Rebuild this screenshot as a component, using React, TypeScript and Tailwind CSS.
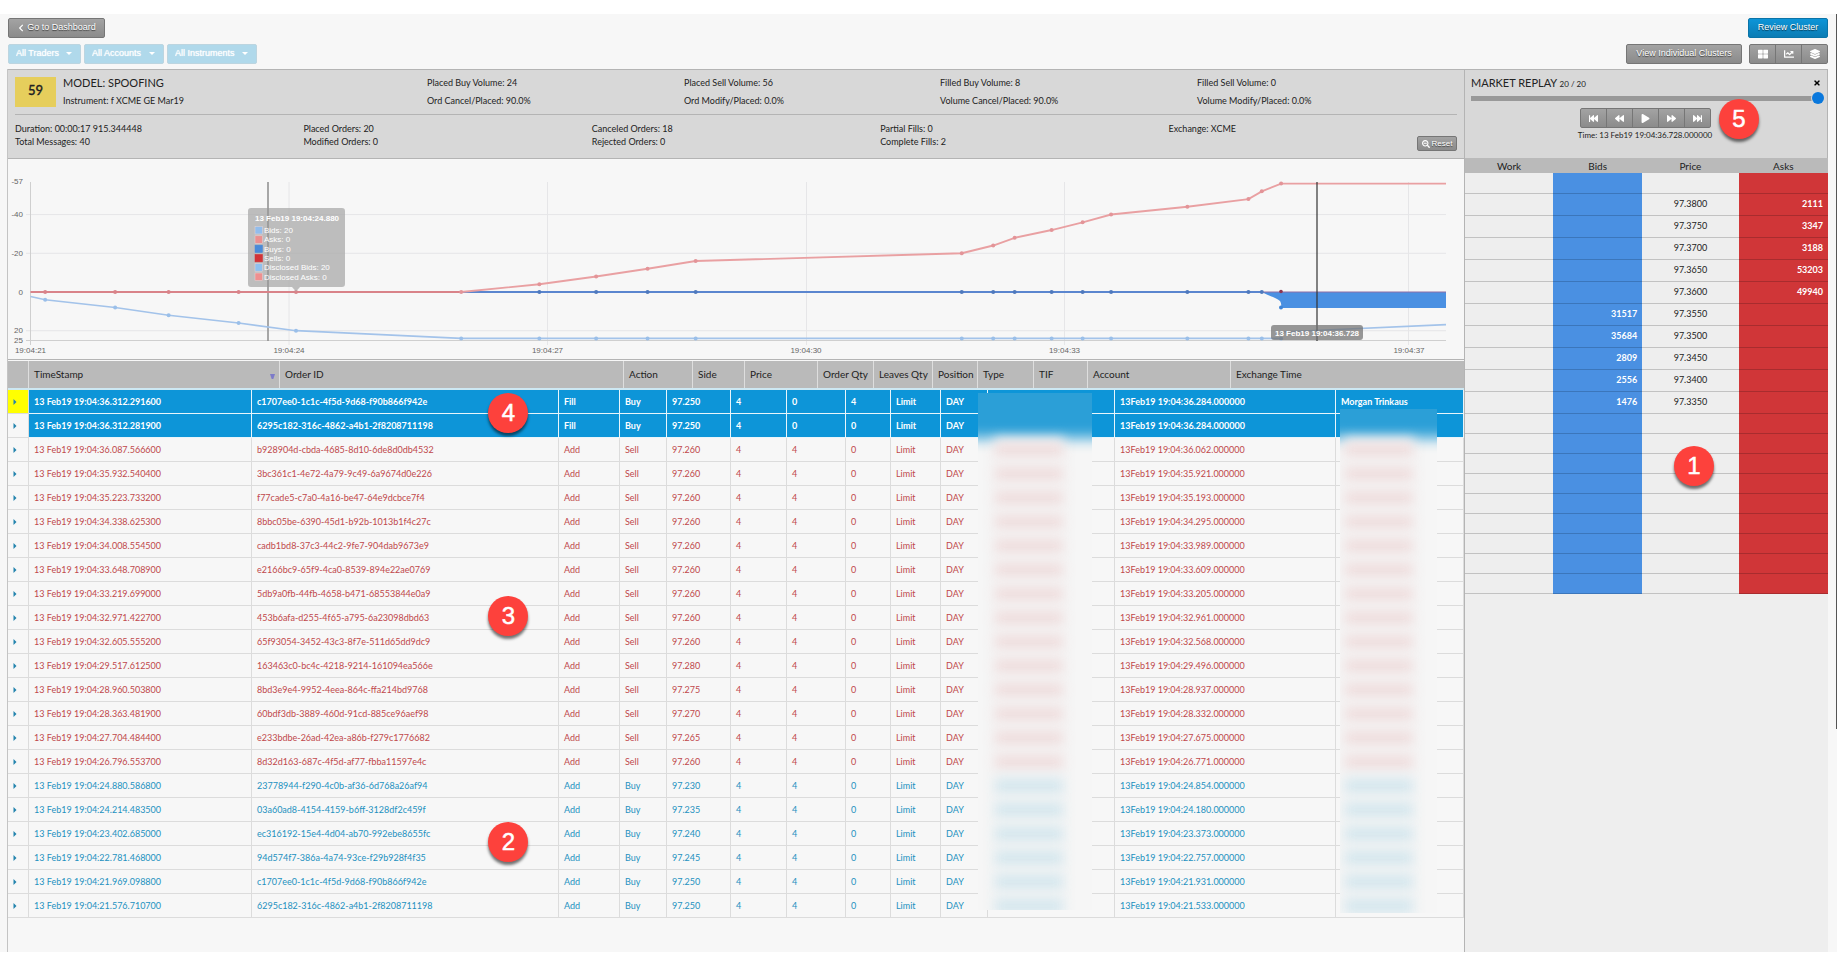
import React from "react";
import {
  FaBackward,
  FaChartLine,
  FaChevronLeft,
  FaFastBackward,
  FaFastForward,
  FaForward,
  FaLayerGroup,
  FaPlay,
  FaSearchMinus,
  FaThLarge,
  FaTimes,
} from "react-icons/fa";

const GREY_BUTTON =
  "flex items-center justify-center border border-[#767676] bg-linear-to-b from-[#a3a3a3] to-[#8b8b8b] font-['Liberation_Sans',sans-serif] text-white [text-shadow:0_1px_1px_rgba(0,0,0,0.6)]";

const HEADER_GRID =
  "grid grid-cols-[21fr_251fr_344fr_69fr_52fr_73fr_56fr_59fr_45fr_56fr_54fr_143fr_233fr]";
const BODY_GRID =
  "grid grid-cols-[21fr_223fr_307fr_61fr_47fr_64fr_56fr_59fr_45fr_50fr_47fr_127fr_221fr_128fr]";

const HEADERS = [
  "", "TimeStamp", "Order ID", "Action", "Side", "Price", "Order Qty",
  "Leaves Qty", "Position", "Type", "TIF", "Account", "Exchange Time",
];

type Order = {
  time: string;
  id: string;
  action: string;
  side: string;
  price: string;
  qty: string;
  leaves: string;
  position: string;
  exchange: string;
  trader?: string;
};

const add = (side: string, time: string, id: string, price: string, exchange: string): Order => ({
  time, id, action: "Add", side, price, qty: "4", leaves: "4", position: "0", exchange,
});

const ORDERS: Order[] = [
  { time: "36.312.291600", id: "c1707ee0-1c1c-4f5d-9d68-f90b866f942e", action: "Fill", side: "Buy", price: "97.250", qty: "4", leaves: "0", position: "4", exchange: "36.284", trader: "Morgan Trinkaus" },
  { time: "36.312.281900", id: "6295c182-316c-4862-a4b1-2f8208711198", action: "Fill", side: "Buy", price: "97.250", qty: "4", leaves: "0", position: "0", exchange: "36.284" },
  add("Sell", "36.087.566600", "b928904d-cbda-4685-8d10-6de8d0db4532", "97.260", "36.062"),
  add("Sell", "35.932.540400", "3bc361c1-4e72-4a79-9c49-6a9674d0e226", "97.260", "35.921"),
  add("Sell", "35.223.733200", "f77cade5-c7a0-4a16-be47-64e9dcbce7f4", "97.260", "35.193"),
  add("Sell", "34.338.625300", "8bbc05be-6390-45d1-b92b-1013b1f4c27c", "97.260", "34.295"),
  add("Sell", "34.008.554500", "cadb1bd8-37c3-44c2-9fe7-904dab9673e9", "97.260", "33.989"),
  add("Sell", "33.648.708900", "e2166bc9-65f9-4ca0-8539-894e22ae0769", "97.260", "33.609"),
  add("Sell", "33.219.699000", "5db9a0fb-44fb-4658-b471-68553844e0a9", "97.260", "33.205"),
  add("Sell", "32.971.422700", "453b6afa-d255-4f65-a795-6a23098dbd63", "97.260", "32.961"),
  add("Sell", "32.605.555200", "65f93054-3452-43c3-8f7e-511d65dd9dc9", "97.260", "32.568"),
  add("Sell", "29.517.612500", "163463c0-bc4c-4218-9214-161094ea566e", "97.280", "29.496"),
  add("Sell", "28.960.503800", "8bd3e9e4-9952-4eea-864c-ffa214bd9768", "97.275", "28.937"),
  add("Sell", "28.363.481900", "60bdf3db-3889-460d-91cd-885ce96aef98", "97.270", "28.332"),
  add("Sell", "27.704.484400", "e233bdbe-26ad-42ea-a86b-f279c1776682", "97.265", "27.675"),
  add("Sell", "26.796.553700", "8d32d163-687c-4f5d-af77-fbba11597e4c", "97.260", "26.771"),
  add("Buy", "24.880.586800", "23778944-f290-4c0b-af36-6d768a26af94", "97.230", "24.854"),
  add("Buy", "24.214.483500", "03a60ad8-4154-4159-b6ff-3128df2c459f", "97.235", "24.180"),
  add("Buy", "23.402.685000", "ec316192-15e4-4d04-ab70-992ebe8655fc", "97.240", "23.373"),
  add("Buy", "22.781.468000", "94d574f7-386a-4a74-93ce-f29b928f4f35", "97.245", "22.757"),
  add("Buy", "21.969.098800", "c1707ee0-1c1c-4f5d-9d68-f90b866f942e", "97.250", "21.931"),
  add("Buy", "21.576.710700", "6295c182-316c-4862-a4b1-2f8208711198", "97.250", "21.533"),
];

type Level = { bid?: string; price?: string; ask?: string };

const LADDER: Level[] = [
  {},
  { price: "97.3800", ask: "2111" },
  { price: "97.3750", ask: "3347" },
  { price: "97.3700", ask: "3188" },
  { price: "97.3650", ask: "53203" },
  { price: "97.3600", ask: "49940" },
  { price: "97.3550", bid: "31517" },
  { price: "97.3500", bid: "35684" },
  { price: "97.3450", bid: "2809" },
  { price: "97.3400", bid: "2556" },
  { price: "97.3350", bid: "1476" },
  {}, {}, {}, {}, {}, {}, {}, {}, {},
];

function Filter({ label, width }: { label: string; width: string }) {
  return (
    <div className={`relative ${width}`}>
      <select
        aria-label={label}
        className="block h-5 w-full appearance-none rounded-[2px] border border-[#bcd5e0] bg-[#b0d9eb] pl-[7px] font-['Liberation_Sans',sans-serif] text-[9px] text-white [text-shadow:0_0_1px_#ffffff]"
      >
        <option>{label}</option>
      </select>
      <svg viewBox="0 0 6 3" className="pointer-events-none absolute top-2 right-[9px] h-[3px] w-[6px] fill-white">
        <path d="M0 0h6L3 3z" />
      </svg>
    </div>
  );
}

function Callout({ n, place }: { n: number; place: string }) {
  return (
    <div
      className={`absolute z-10 flex size-10 items-center justify-center rounded-full bg-[#fd413c] font-['Liberation_Sans',sans-serif] text-[24px] text-white shadow-[0_3px_3px_rgba(0,0,0,0.55)] [-webkit-text-stroke:0.5px_white] ${place}`}
    >
      {n}
    </div>
  );
}

/* Chart scales: seconds after 19:04:00 and signed volume to drawing units. */
const px = (t: number) => 296 + 86.17 * (t - 24.88);
const py = (v: number) => 292 + 1.936 * v;

const ASKS: [number, number][] = [
  [26.797, 0], [27.704, -4], [28.363, -8], [28.96, -12], [29.518, -16], [32.606, -20],
  [32.971, -24], [33.22, -28], [33.649, -32], [34.009, -36], [34.339, -40],
  [35.224, -44], [35.933, -48], [36.088, -52], [36.312, -56],
];
const BIDS: [number, number][] = [
  [21.969, 4], [22.781, 8], [23.402, 12], [24.214, 16], [24.88, 20],
  ...ASKS.map(([t]) => [t, 24] as [number, number]),
];
const line = (pts: [number, number][]) => pts.map(([t, v]) => `${px(t)},${py(v)}`).join(" ");

const LEGEND: [string, string][] = [
  ["Bids: 20", "#92bdec"],
  ["Asks: 0", "#ea9090"],
  ["Buys: 0", "#4a8ad8"],
  ["Sells: 0", "#d23337"],
  ["Disclosed Bids: 20", "#8fc0ee"],
  ["Disclosed Asks: 0", "#ee9090"],
];

function VolumeChart() {
  return (
    <svg
      viewBox="8 159 1456 200"
      role="img"
      aria-label="Order volume over time"
      className="block w-full font-['Liberation_Sans',sans-serif] text-[8px]"
    >
      {[-40, -20, 20].map((v) => (
        <path key={v} d={`M26 ${py(v)}H1446`} stroke="#e6e6e8" strokeWidth="1" />
      ))}
      {[289, 547.5, 806.5, 1064.5, 1408.5].map((x) => (
        <path key={x} d={`M${x} 182V345`} stroke="#e6e6e8" />
      ))}
      <path d="M30.5 182V345M26 340.5H1446" stroke="#cfcfcf" fill="none" />
      {[-57, -40, -20, 0, 20, 25].map((v) => (
        <text key={v} x="23" y={py(v) + 2.5} textAnchor="end" fill="#666">{v}</text>
      ))}
      {([["19:04:21", 30.5], ["19:04:24", 289], ["19:04:27", 547.5], ["19:04:30", 806], ["19:04:33", 1064.5], ["19:04:37", 1409]] as [string, number][]).map(([t, x]) => (
        <text key={t} x={x} y="353" textAnchor="middle" fill="#666">{t}</text>
      ))}

      <path d="M268 182V341" stroke="#8c8c8c" strokeWidth="1.5" />

      <polyline points={`30.5,296.5 ${line(BIDS)}`} fill="none" stroke="#a3c3ea" strokeWidth="1.7" />
      <path d="M1281 332L1446 324.7" stroke="#a3c3ea" strokeWidth="1.7" />
      {BIDS.map(([t, v]) => (
        <circle key={t} cx={px(t)} cy={py(v)} r="2" fill="#9abfe9" />
      ))}

      <path d="M30.5 292H461" stroke="#d98389" strokeWidth="2" />
      <path d="M461 292H1263" stroke="#5b86cf" strokeWidth="2" />
      <path d="M1262 292C1270 297 1276 297 1280 301C1282 304 1281 308 1281 308H1446V292Z" fill="#4a90e2" />
      <path d="M1262 292H1446" stroke="#8d6ea6" strokeWidth="1.2" fill="none" />
      {BIDS.slice(0, 5).map(([t]) => (
        <circle key={t} cx={px(t)} cy="292" r="2" fill="#d98389" />
      ))}
      {ASKS.slice(1, -1).map(([t]) => (
        <circle key={t} cx={px(t)} cy="292" r="2" fill="#4f79bd" />
      ))}
      <circle cx="1281" cy="291.5" r="1.8" fill="#8e3450" />
      <circle cx="1281" cy="307.5" r="2" fill="#3f84d6" />

      <polyline points={`${line(ASKS)} 1446,${py(-56)}`} fill="none" stroke="#e9a0a2" strokeWidth="1.9" />
      {ASKS.map(([t, v]) => (
        <circle key={t} cx={px(t)} cy={py(v)} r="2" fill="#e39498" />
      ))}

      <path d="M1317 182V341" stroke="#333" strokeWidth="1.2" />
      <rect x="1271" y="325" width="92" height="15" rx="3" fill="#707070" fillOpacity="0.72" />
      <text x="1317" y="335.5" textAnchor="middle" fill="#fff" fontWeight="700">13 Feb19 19:04:36.728</text>

      <path d="M251 208H342a3 3 0 0 1 3 3V284a3 3 0 0 1-3 3H300L296 291.5L292 287H251a3 3 0 0 1-3-3V211a3 3 0 0 1 3-3Z" fill="#a9a9a9" fillOpacity="0.75" />
      <path d="M268 208V287" stroke="#8c8c8c" strokeOpacity="0.8" />
      <text x="255" y="221" fill="#fff" fontWeight="700">13 Feb19 19:04:24.880</text>
      {LEGEND.map(([label, color], i) => (
        <g key={label}>
          <rect x="255" y={226.5 + i * 9.3} width="7.5" height="7.5" fill={color} stroke={i > 1 && i < 4 ? color : "#e6d6d8"} strokeWidth="0.5" />
          <text x="264" y={233 + i * 9.3} fill="#fff">{label}</text>
        </g>
      ))}
    </svg>
  );
}

function BlurredColumn({ place, bars, top }: { place: string; bars: string; top: number }) {
  return (
    <div aria-hidden="true" className={`absolute overflow-hidden bg-[#f6f6f6] ${place}`}>
      <div className="flow-root" style={{ marginTop: -top }}>
        <div className="relative -mx-4 -mt-4 h-16 bg-[#2b9fd7] blur-[7px]" />
        {ORDERS.slice(2).map((o, i) => (
          <div key={i} className={`flex h-6 items-center ${bars}`}>
            <div className={`grid h-6 w-full items-center blur-[6px] ${o.side === "Sell" ? "bg-[#f3eeee]" : "bg-[#eaf0f2]"}`}>
              <div className={`h-[10px] rounded-full ${o.side === "Sell" ? "bg-[#eedada]" : "bg-[#d0e5ed]"}`} />
            </div>
          </div>
        ))}
      </div>
    </div>
  );
}

function OrdersTable() {
  return (
    <div className="relative">
      <table className="block w-full">
        <thead className="block border-t border-b-2 border-t-[#f7f7f7] border-b-[#cde8f3]">
          <tr className={`h-[27px] bg-[#bababa] ${HEADER_GRID}`}>
            {HEADERS.map((h, i) => (
              <th
                key={i}
                scope="col"
                className="flex min-w-0 items-center justify-between border-r border-[#dedede] pr-1 pl-[5px] text-left text-[10px] font-normal whitespace-nowrap text-[#222] last:border-r-0"
              >
                {h}
                {h === "TimeStamp" && (
                  <svg viewBox="0 0 5 5" className="mt-[3px] size-[5px] fill-[#7d7bc9]">
                    <path d="M0 0h5L3.3 5H1.7z" />
                  </svg>
                )}
              </th>
            ))}
          </tr>
        </thead>
        <tbody className="block">
          {ORDERS.map((o, r) => {
            const fill = o.action === "Fill";
            const tone = fill
              ? "bg-[#0d95d8] font-bold text-white border-[#e8f5fb]"
              : o.side === "Sell"
                ? "text-[#c0484b] border-[#dcdcdc]"
                : "text-[#2391c0] border-[#dcdcdc]";
            const cells = [
              `13 Feb19 19:04:${o.time}`, o.id, o.action, o.side, o.price, o.qty, o.leaves,
              o.position, "Limit", "DAY", "", `13Feb19 19:04:${o.exchange}.000000`, o.trader ?? "",
            ];
            return (
              <tr key={r} className={`h-6 text-[9px] ${BODY_GRID}`}>
                <td className={`flex min-w-0 items-center border-r border-b border-[#dcdcdc] pl-[5px] ${r === 0 ? "bg-[#ffff00]" : ""}`}>
                  <button type="button" aria-label="Expand row" className="flex size-2 items-center">
                    <svg viewBox="0 0 4 6" className="h-[6px] w-[4px] fill-[#2383ad]">
                      <path d="M0.5 0L3.5 3L0.5 6z" />
                    </svg>
                  </button>
                </td>
                {cells.map((c, i) => (
                  <td key={i} className={`flex min-w-0 items-center border-r border-b pl-[5px] whitespace-nowrap ${tone}`}>
                    {c}
                  </td>
                ))}
              </tr>
            );
          })}
        </tbody>
      </table>
      <BlurredColumn place="top-[33px] left-[66.62%] h-[517px] w-[7.83%]" bars="ml-4 w-[70px]" top={3} />
      <BlurredColumn place="top-[49px] left-[91.48%] h-[504px] w-[6.66%]" bars="ml-1 w-[70px]" top={19} />
      <Callout n={4} place="top-[33px] left-[33%]" />
      <Callout n={3} place="top-[236px] left-[33%]" />
      <Callout n={2} place="top-[462px] left-[33%]" />
    </div>
  );
}

function Summary() {
  return (
    <section className="border-y border-[#b4b4b4] bg-[#d8d8d8] px-[7px] pt-1 text-[9px] text-[#222]">
      <div className="grid h-[41px] grid-cols-[412fr_257fr_256fr_257fr_260fr] border-b border-[#b4b4b4] leading-[18px]">
        <div className="flex gap-[7px]">
          <div className="mt-[3px] flex h-[30px] w-[41px] items-center justify-center bg-[#e6ce5c] pb-1 text-[13px] font-medium [-webkit-text-stroke:0.3px_#222]">59</div>
          <div>
            <h1 className="text-[11px]">MODEL: SPOOFING</h1>
            <p>Instrument: f XCME GE Mar19</p>
          </div>
        </div>
        <div><p>Placed Buy Volume: 24</p><p>Ord Cancel/Placed: 90.0%</p></div>
        <div><p>Placed Sell Volume: 56</p><p>Ord Modify/Placed: 0.0%</p></div>
        <div><p>Filled Buy Volume: 8</p><p>Volume Cancel/Placed: 90.0%</p></div>
        <div><p>Filled Sell Volume: 0</p><p>Volume Modify/Placed: 0.0%</p></div>
      </div>
      <div className="grid h-[43px] grid-cols-5 pt-[7px] leading-[13px]">
        <div><p>Duration: 00:00:17 915.344448</p><p>Total Messages: 40</p></div>
        <div><p>Placed Orders: 20</p><p>Modified Orders: 0</p></div>
        <div><p>Canceled Orders: 18</p><p>Rejected Orders: 0</p></div>
        <div><p>Partial Fills: 0</p><p>Complete Fills: 2</p></div>
        <div className="flex justify-between">
          <p>Exchange: XCME</p>
          <button type="button" className={`mt-[14px] h-[15px] w-10 gap-[2px] rounded-[2px] text-[8px] ${GREY_BUTTON}`}>
            <FaSearchMinus className="size-2" />
            Reset
          </button>
        </div>
      </div>
    </section>
  );
}

function MarketReplay() {
  const controls = [
    { label: "First", Icon: FaFastBackward },
    { label: "Previous", Icon: FaBackward },
    { label: "Play", Icon: FaPlay },
    { label: "Next", Icon: FaForward },
    { label: "Last", Icon: FaFastForward },
  ];
  return (
    <aside className="relative w-[364px] shrink-0 border-t border-l border-[#b4b4b4] bg-[#eeeeee]">
      <div className="h-[88px] border-r border-[#b4b4b4] bg-[#d8d8d8] pt-1 pl-[6px]">
        <div className="flex h-[18px] items-center justify-between pr-[6px]">
          <h2 className="text-[11px] text-[#222]">
            MARKET REPLAY <span className="text-[8px]">20 / 20</span>
          </h2>
          <button type="button" aria-label="Close" className="text-black">
            <FaTimes className="size-2" />
          </button>
        </div>
        <input
          type="range"
          aria-label="Replay position"
          min={0}
          max={20}
          defaultValue={20}
          className="mr-1 block h-3 w-[353px] appearance-none bg-transparent [&::-webkit-slider-runnable-track]:h-[5px] [&::-webkit-slider-runnable-track]:bg-[#999999] [&::-webkit-slider-thumb]:-mt-1 [&::-webkit-slider-thumb]:size-3 [&::-webkit-slider-thumb]:appearance-none [&::-webkit-slider-thumb]:rounded-full [&::-webkit-slider-thumb]:bg-[#0a78dc] [&::-webkit-slider-thumb]:shadow-[0_0_0_1px_#d8d8d8]"
        />
        <div className="mt-1 flex justify-center pr-2">
          {controls.map(({ label, Icon }) => (
            <button
              key={label}
              type="button"
              aria-label={label}
              className={`-ml-px h-5 w-[27px] first:ml-0 first:rounded-l-[2px] last:rounded-r-[2px] ${GREY_BUTTON}`}
            >
              <Icon className="size-[9px]" />
            </button>
          ))}
        </div>
        <p className="mt-[2px] pr-2 text-center text-[8px] leading-[11px] text-[#222]">Time: 13 Feb19 19:04:36.728.000000</p>
      </div>
      <table className="w-full table-fixed border-collapse text-[9px] text-[#222]">
        <colgroup>
          <col className="w-[24.3%]" />
          <col className="w-[24.5%]" />
          <col className="w-[26.6%]" />
          <col className="w-[24.6%]" />
        </colgroup>
        <thead>
          <tr className="h-[15px] bg-[#bababa] text-[10px] leading-[14px]">
            <th scope="col" className="font-normal">Work</th>
            <th scope="col" className="font-normal">Bids</th>
            <th scope="col" className="font-normal">Price</th>
            <th scope="col" className="font-normal">Asks</th>
          </tr>
        </thead>
        <tbody>
          {LADDER.map((l, i) => (
            <tr key={i} className={`leading-[14px] ${l.price ? "h-[22px]" : "h-5"}`}>
              <td className="border-b border-[#c2c2c2] p-0" />
              <td className="border-b border-[#3b76bb] bg-[#4a90e2] p-0 pr-[5px] text-right font-bold text-white">{l.bid}</td>
              <td className="border-b border-[#c2c2c2] p-0 text-center">{l.price}</td>
              <td className="border-b border-[#a82c2e] bg-[#d03638] p-0 pr-[5px] text-right font-bold text-white">{l.ask}</td>
            </tr>
          ))}
        </tbody>
      </table>
      <Callout n={5} place="top-[29px] right-[69px]" />
      <Callout n={1} place="top-[376px] right-[114px]" />
    </aside>
  );
}

export default function App() {
  return (
    <div className="min-h-screen bg-white pt-[14px] pb-[15px] font-[Lato,sans-serif]">
      <div className="relative bg-[#f7f7f7] pr-[9px] pl-[7px]">
        <div className="absolute top-0 right-0 h-[715px] w-px bg-[#555555]" />
        <header className="flex flex-col gap-[6px] pt-1 pb-[5px] pl-px">
          <div className="flex items-center justify-between">
            <button type="button" className={`h-5 w-[97px] gap-[2px] rounded-[2px] text-[9px] ${GREY_BUTTON}`}>
              <FaChevronLeft className="size-2" />
              Go to Dashboard
            </button>
            <button
              type="button"
              className="h-5 w-20 rounded-[2px] border border-[#0a74a8] bg-linear-to-b from-[#0d95d8] to-[#0b7cb4] font-['Liberation_Sans',sans-serif] text-[9px] text-white [text-shadow:0_1px_1px_rgba(0,0,0,0.6)]"
            >
              Review Cluster
            </button>
          </div>
          <div className="flex items-center gap-[3px]">
            <Filter label="All Traders" width="w-[73px]" />
            <Filter label="All Accounts" width="w-[80px]" />
            <Filter label="All Instruments" width="w-[90px]" />
            <button type="button" className={`mr-1 ml-auto h-5 w-[116px] rounded-[2px] text-[9px] ${GREY_BUTTON}`}>
              View Individual Clusters
            </button>
            <div className="flex">
              <button type="button" aria-label="Grid view" className={`h-5 w-[27px] rounded-l-[2px] ${GREY_BUTTON}`}>
                <FaThLarge className="size-[10px]" />
              </button>
              <button type="button" aria-label="Chart view" className={`-ml-px h-5 w-[27px] ${GREY_BUTTON}`}>
                <FaChartLine className="size-[10px]" />
              </button>
              <button type="button" aria-label="Layers" className={`-ml-px h-5 w-[27px] rounded-r-[2px] ${GREY_BUTTON}`}>
                <FaLayerGroup className="size-[10px]" />
              </button>
            </div>
          </div>
        </header>
        <main className="flex">
          <div className="min-w-0 flex-1 border-l border-[#c4c4c4] pb-[34px]">
            <Summary />
            <div className="border-b border-[#b4b4b4]">
              <VolumeChart />
            </div>
            <OrdersTable />
          </div>
          <MarketReplay />
        </main>
      </div>
    </div>
  );
}
